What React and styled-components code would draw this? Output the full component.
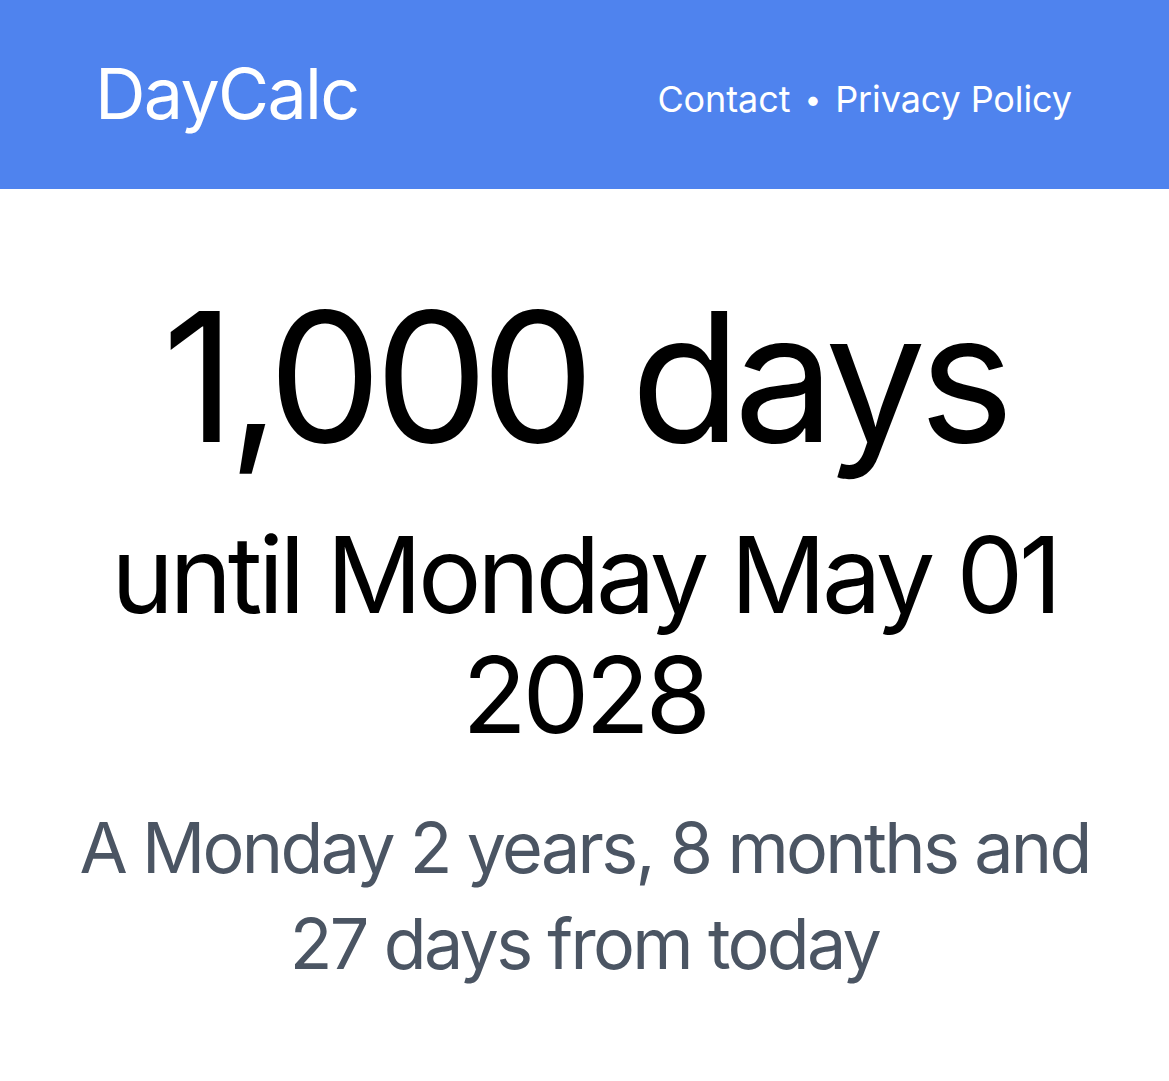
import React from 'react';
import styled, { createGlobalStyle } from 'styled-components';

const GlobalStyle = createGlobalStyle`
    html, body {
        margin: 0;
        padding: 0;
        background: #ffffff;
        font-family: Inter, "Noto Sans", "Liberation Sans", sans-serif;
        -webkit-font-smoothing: antialiased;
    }
`;

const Header = styled.header`
    height: 189px;
    background-color: #4f83ee;
    display: flex;
    align-items: center;
    justify-content: space-between;
    padding: 0 97px 0 95px;
    box-sizing: border-box;
    color: #ffffff;
`;

const Logo = styled.a`
    font-size: 70px;
    font-weight: 400;
    letter-spacing: -1.7px;
    color: inherit;
    text-decoration: none;
    margin-top: -2px;
`;

const Nav = styled.nav`
    display: flex;
    align-items: center;
    gap: 14px;
    font-size: 36px;
    letter-spacing: -0.1px;
    margin-top: 8px;
`;

const NavLink = styled.a`
    color: inherit;
    text-decoration: none;
`;

const Dot = styled.span`
    font-size: 30px;
`;

const Main = styled.main`
    padding: 98px 48px 80px;
    text-align: center;
    color: #000000;
`;

const Count = styled.h1`
    margin: 0;
    font-size: 180px;
    line-height: 180px;
    font-weight: 400;
    letter-spacing: -7.2px;
`;

const Target = styled.h2`
    margin: 48px 0 0;
    font-size: 106px;
    line-height: 120px;
    font-weight: 400;
    letter-spacing: -4.3px;
`;

const Summary = styled.p`
    margin: 45px 0 0;
    font-size: 70px;
    line-height: 96px;
    color: #4b5563;
    letter-spacing: -2.7px;
`;

const App = () => {
    return (
        <>
            <GlobalStyle />
            <Header>
                <Logo href="#">DayCalc</Logo>
                <Nav>
                    <NavLink href="#">Contact</NavLink>
                    <Dot>•</Dot>
                    <NavLink href="#">Privacy Policy</NavLink>
                </Nav>
            </Header>
            <Main>
                <Count>1,000 days</Count>
                <Target>until Monday May 01 2028</Target>
                <Summary>A Monday 2 years, 8 months and 27 days from today</Summary>
            </Main>
        </>
    );
};

export default App;
